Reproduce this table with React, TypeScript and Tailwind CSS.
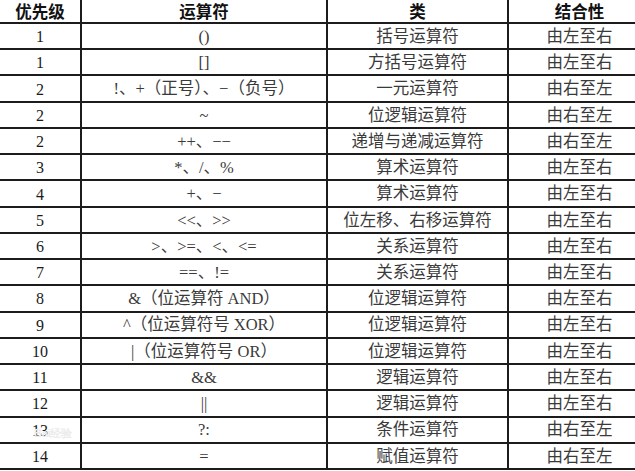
const rows: [string, string, string, string][] = [
  ["1", "()", "括号运算符", "由左至右"],
  ["1", "[]", "方括号运算符", "由左至右"],
  ["2", "!、+（正号）、−（负号）", "一元运算符", "由右至左"],
  ["2", "~", "位逻辑运算符", "由右至左"],
  ["2", "++、−−", "递增与递减运算符", "由右至左"],
  ["3", "*、/、%", "算术运算符", "由左至右"],
  ["4", "+、−", "算术运算符", "由左至右"],
  ["5", "<<、>>", "位左移、右移运算符", "由左至右"],
  ["6", ">、>=、<、<=", "关系运算符", "由左至右"],
  ["7", "==、!=", "关系运算符", "由左至右"],
  ["8", "&（位运算符 AND）", "位逻辑运算符", "由左至右"],
  ["9", "^（位运算符号 XOR）", "位逻辑运算符", "由左至右"],
  ["10", "|（位运算符号 OR）", "位逻辑运算符", "由左至右"],
  ["11", "&&", "逻辑运算符", "由左至右"],
  ["12", "||", "逻辑运算符", "由左至右"],
  ["13", "?:", "条件运算符", "由右至左"],
  ["14", "=", "赋值运算符", "由右至左"],
];

const serif = "font-['Liberation_Serif','Noto_Sans_CJK_SC',serif]";

export default function App() {
  return (
    <div className="relative w-[635px] h-[471px] overflow-hidden bg-white">
      <div className="grid w-[650px] h-[470px] grid-cols-[82px_246px_181px_141px] grid-rows-[24px_repeat(17,minmax(0,1fr))]">
        {["优先级", "运算符", "类", "结合性"].map((h, i) => (
          <div
            key={h}
            className={`flex items-center justify-center leading-none border-b-2 border-[#1c1c1c] text-[16.5px] font-bold text-[#111] font-['Noto_Sans_CJK_SC',sans-serif] ${
              i < 3 ? "border-r-2" : ""
            }`}
          >
            {h}
          </div>
        ))}
        {rows.map((r, ri) =>
          r.map((c, ci) => (
            <div
              key={`${ri}-${ci}`}
              className={`flex items-center justify-center leading-none pt-[2px] border-b-2 border-[#1c1c1c] whitespace-nowrap ${serif} ${
                ci < 3 ? "border-r-2" : ""
              } ${ci === 0 ? "text-[16px] text-[#1a1a1a]" : "text-[16.5px] text-[#3a3a3a]"}`}
            >
              {c}
            </div>
          ))
        )}
      </div>
      <div className="absolute left-[34px] top-[428px] text-[11px] font-bold leading-none text-[#ececec] font-['Liberation_Sans',sans-serif] tracking-tight">
        Bai经验
      </div>
    </div>
  );
}
